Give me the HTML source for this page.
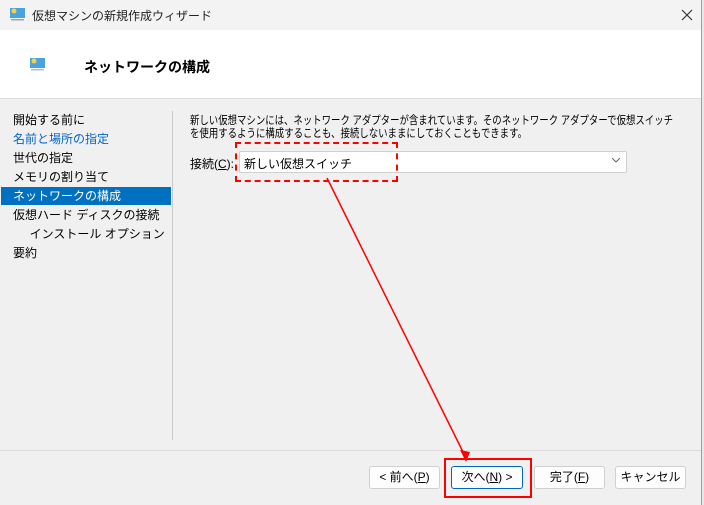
<!DOCTYPE html>
<html><head><meta charset="utf-8"><style>
body{margin:0;width:704px;height:505px;overflow:hidden;background:#f0f0f0;font-family:"Liberation Sans","Noto Sans CJK JP",sans-serif;font-size:12px;color:#000;position:relative}
.a{position:absolute;white-space:nowrap}
.btn{position:absolute;top:466px;height:21px;background:#fdfdfd;border:1px solid #d0d0d0;border-radius:3px;text-align:center;line-height:21px;font-size:12px}
</style></head><body>
<div class="a" style="left:0;top:0;width:702px;height:30px;background:#f3f3f3"></div>
<div class="a" style="left:0;top:30px;width:701px;height:68px;background:#fff;border-bottom:1px solid #dcdcdc"></div>
<div class="a" style="left:701px;top:0;width:3px;height:505px;background:#e8e8e8;border-left:1px solid #a0a0a0"></div>
<svg class="a" style="left:9px;top:7px" width="17" height="15"><rect x="1" y="1" width="15" height="10" fill="#4aa3e0"/><circle cx="5" cy="4" r="2.5" fill="#f8d040"/><rect x="2" y="12" width="13" height="1.5" fill="#90a8c0"/></svg>
<div class="a" style="left:32px;top:7px;font-size:12px;color:#222">仮想マシンの新規作成ウィザード</div>
<svg class="a" style="left:681px;top:9px" width="12" height="12"><path d="M1 1L11 11M11 1L1 11" stroke="#333" stroke-width="1.2"/></svg>
<svg class="a" style="left:29px;top:57px" width="17" height="15"><rect x="1" y="1" width="15" height="10" fill="#4aa3e0"/><circle cx="5" cy="4" r="2.5" fill="#f8d040"/><rect x="2" y="12" width="13" height="1.5" fill="#b0c0d0"/></svg>
<div class="a" style="left:84px;top:57px;font-size:14px;font-weight:bold">ネットワークの構成</div>
<div class="a" style="left:13px;top:111px;line-height:19px">開始する前に<br><span style="color:#0066cc">名前と場所の指定</span><br>世代の指定<br>メモリの割り当て</div>
<div class="a" style="left:1px;top:187px;width:170px;height:18px;background:#0070c0"></div>
<div class="a" style="left:13px;top:187px;line-height:19px;color:#fff">ネットワークの構成</div>
<div class="a" style="left:13px;top:206px;line-height:19px">仮想ハード ディスクの接続<br>&nbsp;&nbsp;&nbsp;&nbsp;&nbsp;インストール オプション<br>要約</div>
<div class="a" style="left:172px;top:111px;width:1px;height:329px;background:#c8c8c8"></div>
<svg class="a" style="left:190px;top:112px" width="500" height="30" font-family="Liberation Sans, Noto Sans CJK JP, sans-serif" font-size="11.5"><text x="0" y="12" textLength="483" lengthAdjust="spacingAndGlyphs">新しい仮想マシンには、ネットワーク アダプターが含まれています。そのネットワーク アダプターで仮想スイッチ</text><text x="0" y="25" textLength="337" lengthAdjust="spacingAndGlyphs">を使用するように構成することも、接続しないままにしておくこともできます。</text></svg>
<div class="a" style="left:190px;top:155px">接続(<u>C</u>):</div>
<div class="a" style="left:239px;top:151px;width:386px;height:20px;background:#fff;border:1px solid #d0d0d0;border-radius:2px"></div>
<div class="a" style="left:244px;top:155px">新しい仮想スイッチ</div>
<svg class="a" style="left:611px;top:157px" width="10" height="6"><path d="M1 1L5 5L9 1" fill="none" stroke="#666"/></svg>
<div class="a" style="left:235px;top:142px;width:159px;height:36px;border:2px dashed #f00"></div>
<div class="a" style="left:0;top:450px;width:701px;height:1px;background:#dcdcdc"></div>
<div class="btn" style="left:369px;width:69px">&lt; 前へ(<u>P</u>)</div>
<div class="btn" style="left:451px;width:70px;border-color:#0067c0">次へ(<u>N</u>) &gt;</div>
<div class="btn" style="left:534px;width:69px">完了(<u>F</u>)</div>
<div class="btn" style="left:615px;width:69px">キャンセル</div>
<div class="a" style="left:444px;top:458px;width:84px;height:36px;border:2px solid #f00"></div>
<svg class="a" style="left:0;top:0" width="704" height="505"><line x1="327" y1="178" x2="466" y2="458" stroke="#f00" stroke-width="1.5"/><path d="M466 462L460 450L470 452Z" fill="#f00"/></svg>
</body></html>
